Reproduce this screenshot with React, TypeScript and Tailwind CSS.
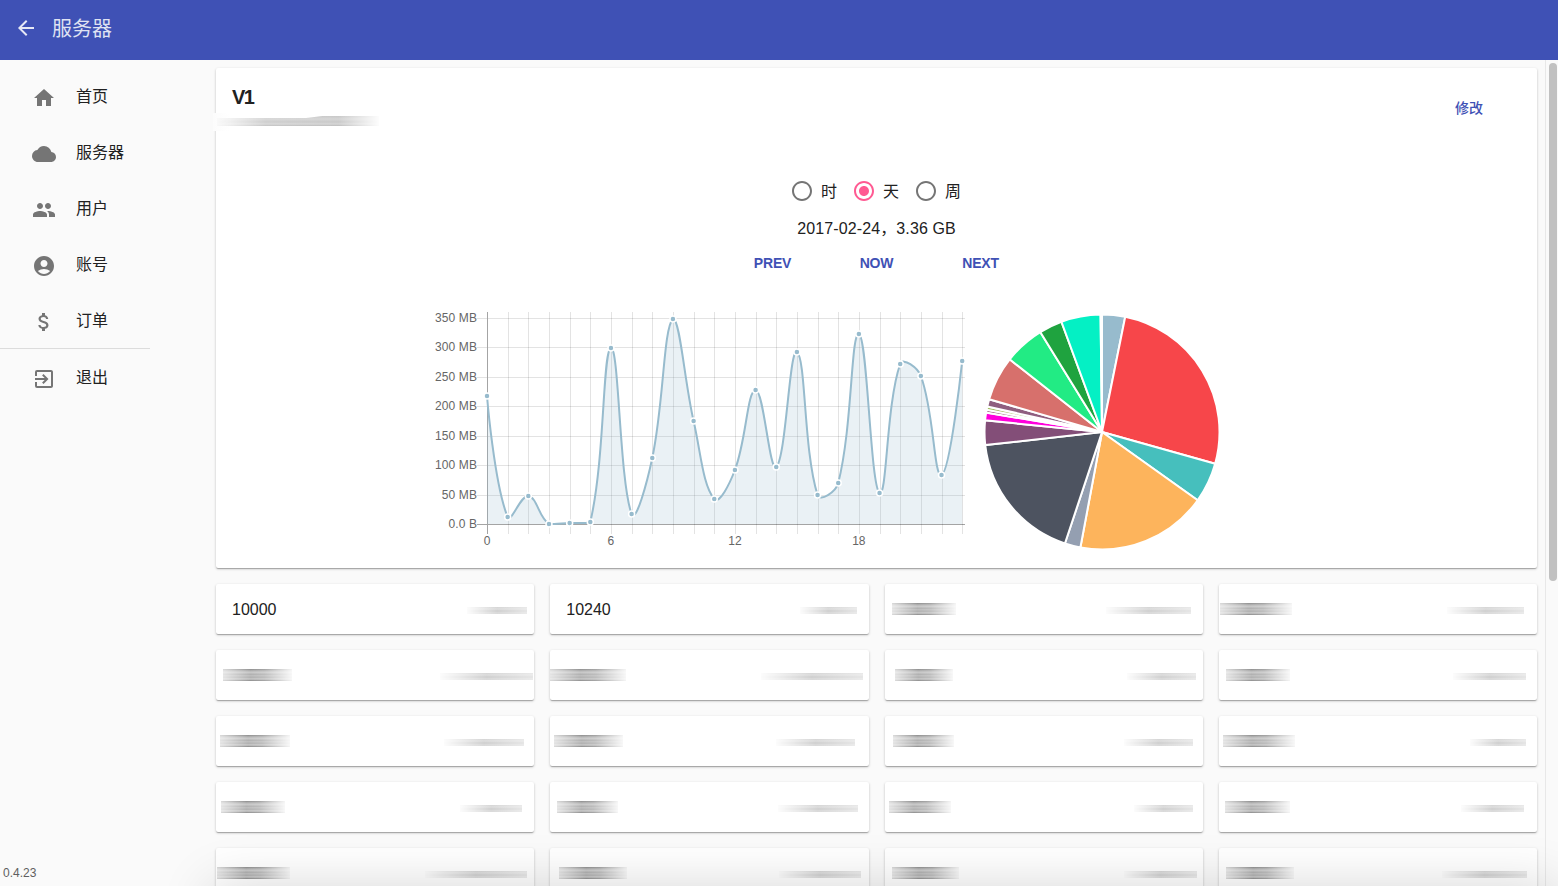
import {
  MdAccountCircle,
  MdArrowBack,
  MdAttachMoney,
  MdCloud,
  MdExitToApp,
  MdHome,
  MdPeople,
  MdRadioButtonChecked,
  MdRadioButtonUnchecked,
} from "react-icons/md";

const MENU = [
  { label: "首页", Icon: MdHome },
  { label: "服务器", Icon: MdCloud },
  { label: "用户", Icon: MdPeople },
  { label: "账号", Icon: MdAccountCircle },
  { label: "订单", Icon: MdAttachMoney },
];

const RANGES = ["时", "天", "周"];

// y position of every hour in the chart
const FLOW = [
  396, 517, 496, 524, 523, 522, 348, 514, 458, 319, 421, 499, 470, 390, 467,
  352, 495, 483, 334, 493, 364, 376, 475, 361,
];

const SLICES = [
  { end: 11.4, color: "#97bbcd" },
  { end: 105.65, color: "#f7464a" },
  { end: 125.5, color: "#46bfbd" },
  { end: 190.6, color: "#fdb45c" },
  { end: 198.4, color: "#949fb1" },
  { end: 263.6, color: "#4d5360" },
  { end: 275.7, color: "#834e78" },
  { end: 279.5, color: "#ff00dc" },
  { end: 280.9, color: "#8a4f6a" },
  { end: 282.5, color: "#a3c062" },
  { end: 286.2, color: "#8f5f80" },
  { end: 308.2, color: "#d7706c" },
  { end: 328.3, color: "#22eb84" },
  { end: 339.8, color: "#1fa33f" },
  { end: 359.3, color: "#04f0c4" },
  { end: 360, color: "#ffffff" },
];

type Port = { port?: string; left?: number[]; right: number[] };

// left / right: [distance from the card edge, width]
const PORTS: Port[] = [
  { port: "10000", right: [7, 60] },
  { port: "10240", right: [12, 57] },
  { left: [7, 64], right: [12, 85] },
  { left: [1, 72], right: [13, 77] },
  { left: [7, 69], right: [1, 93] },
  { left: [0, 76], right: [6, 102] },
  { left: [10, 58], right: [7, 69] },
  { left: [7, 64], right: [11, 73] },
  { left: [4, 70], right: [10, 80] },
  { left: [4, 69], right: [14, 79] },
  { left: [8, 61], right: [10, 69] },
  { left: [4, 72], right: [11, 56] },
  { left: [5, 64], right: [12, 62] },
  { left: [7, 61], right: [11, 80] },
  { left: [4, 62], right: [10, 59] },
  { left: [6, 65], right: [13, 63] },
  { left: [1, 73], right: [7, 102] },
  { left: [9, 68], right: [8, 82] },
  { left: [7, 67], right: [6, 73] },
  { left: [7, 68], right: [10, 85] },
];

const CARD =
  "rounded-[2px] bg-white shadow-[0_1px_3px_0_rgba(0,0,0,0.2),0_1px_1px_0_rgba(0,0,0,0.14),0_2px_1px_-1px_rgba(0,0,0,0.12)]";

function FlowChart() {
  const top = 318;
  const bottom = 524;
  const points = FLOW.map((y, i) => ({ x: 487 + i * 20.66, y }));
  const clamp = (y: number) => Math.min(bottom, Math.max(top, y));

  const controls = points.map((p, i) => {
    const prev = points[i - 1];
    const next = points[i + 1];
    if (!prev || !next) return { inner: p, outer: p };
    const d1 = Math.hypot(p.x - prev.x, p.y - prev.y);
    const d2 = Math.hypot(next.x - p.x, next.y - p.y);
    const a = (0.4 * d1) / (d1 + d2);
    const b = (0.4 * d2) / (d1 + d2);
    const dx = next.x - prev.x;
    const dy = next.y - prev.y;
    return {
      inner: { x: p.x - a * dx, y: clamp(p.y - a * dy) },
      outer: { x: p.x + b * dx, y: clamp(p.y + b * dy) },
    };
  });

  const line = points
    .map((p, i) => {
      if (i === 0) return `M${p.x} ${p.y}`;
      const c1 = controls[i - 1].outer;
      const c2 = controls[i].inner;
      return `C${c1.x} ${c1.y} ${c2.x} ${c2.y} ${p.x} ${p.y}`;
    })
    .join(" ");

  const rows = [0, 1, 2, 3, 4, 5, 6, 7];

  return (
    <svg width="540" height="250" viewBox="427 306 540 250" className="shrink-0">
      {rows.map((n) => {
        const y = Math.round(bottom - n * 29.43) + 0.5;
        return (
          <g key={n}>
            <line
              x1="477"
              x2="965"
              y1={y}
              y2={y}
              stroke={n === 0 ? "#a4a4a4" : "rgba(0,0,0,0.11)"}
            />
            <text
              x="477"
              y={y + 3.5}
              textAnchor="end"
              fontSize="12"
              letterSpacing="0.1"
              fill="#666"
            >
              {n === 0 ? "0.0 B" : `${n * 50} MB`}
            </text>
          </g>
        );
      })}
      {points.map((p, i) => (
        <line
          key={i}
          x1={Math.round(p.x) + 0.5}
          x2={Math.round(p.x) + 0.5}
          y1="312"
          y2="534"
          stroke={i === 0 ? "#a4a4a4" : "rgba(0,0,0,0.11)"}
        />
      ))}
      {[0, 6, 12, 18].map((n) => (
        <text key={n} x={points[n].x} y="545" textAnchor="middle" fontSize="12" fill="#666">
          {n}
        </text>
      ))}
      <path d={`${line} L${points[23].x} ${bottom} L487 ${bottom}Z`} fill="#97bbcd" fillOpacity="0.2" />
      <path d={line} fill="none" stroke="#97bbcd" strokeWidth="2" />
      {points.map((p, i) => (
        <circle key={i} cx={p.x} cy={p.y} r="3" fill="#97bbcd" stroke="#fff" strokeWidth="1.5" />
      ))}
    </svg>
  );
}

function UserPie() {
  const at = (deg: number) => {
    const rad = (deg * Math.PI) / 180;
    return `${119 + 117.5 * Math.sin(rad)} ${119 - 117.5 * Math.cos(rad)}`;
  };

  return (
    <svg width="238" height="238" viewBox="0 0 238 238" className="mt-[7px] shrink-0">
      {SLICES.map(({ end, color }, i) => {
        const start = i === 0 ? 0 : SLICES[i - 1].end;
        return (
          <path
            key={end}
            d={`M119 119 L${at(start)} A117.5 117.5 0 0 1 ${at(end)}Z`}
            fill={color}
            stroke="#fff"
            strokeWidth="2"
          />
        );
      })}
    </svg>
  );
}

function PortCard({ port, left, right }: Port) {
  return (
    <div className={`flex h-[50px] items-center justify-between ${CARD}`}>
      {port && <span className="pl-4 pt-0.5 text-base">{port}</span>}
      {left && (
        <span
          className="h-3 bg-[linear-gradient(to_bottom,#8a8a8a_0,#b8b8b8_2px,#cccccc_4px,#ababab_5px,#c4c4c4_7px,#aaaaaa_8px,#cacaca_10px,#858585_12px)] [mask-image:linear-gradient(to_right,rgba(0,0,0,0.35),#000_40%,rgba(0,0,0,0.85)_60%,rgba(0,0,0,0.1))]"
          style={{ marginLeft: left[0], width: left[1] }}
        />
      )}
      <span
        className="mt-[3px] h-[7px] bg-[linear-gradient(to_bottom,#d4d4d4_0,#dedede_2px,#cdcdcd_4px,#dddddd_6px,#d6d6d6_7px)] [mask-image:linear-gradient(to_right,rgba(0,0,0,0.08),#000_50%,rgba(0,0,0,0.55))]"
        style={{ marginRight: right[0], width: right[1] }}
      />
    </div>
  );
}

function Sidebar() {
  return (
    <nav className="flex w-[216px] shrink-0 flex-col pt-[10px]">
      {MENU.map(({ label, Icon }) => (
        <a key={label} className="flex h-14 items-center gap-5 pl-8">
          <Icon size={24} className="text-[#757575]" />
          <span className="-mt-0.5">{label}</span>
        </a>
      ))}
      <div className="-mt-0.5 mb-0.5 h-px w-[150px] shrink-0 bg-[#dcdcdc]" />
      <a className="flex h-14 items-center gap-5 pl-8">
        <MdExitToApp size={24} className="text-[#757575]" />
        <span className="-mt-0.5">退出</span>
      </a>
      <span className="mt-auto pb-[5px] pl-[3px] text-xs leading-4 text-[#5f5f5f]">0.4.23</span>
    </nav>
  );
}

export default function App() {
  return (
    <div className="relative flex h-[886px] w-[1558px] flex-col overflow-hidden bg-[#fafafa] font-['Liberation_Sans','Noto_Sans_CJK_SC',sans-serif] text-base text-[#212121]">
      <header className="flex h-[60px] shrink-0 items-center bg-[#3f51b5] pb-1 pl-[14px] text-[#e6e8f5]">
        <MdArrowBack size={24} />
        <h1 className="pl-[14px] pt-0.5 text-xl font-normal text-[#dfe2f2]">服务器</h1>
      </header>

      <div className="flex min-h-0 flex-1">
        <Sidebar />

        <main className="flex w-[1321px] shrink-0 flex-col gap-4 pt-2">
          <section className={`relative flex h-[500px] shrink-0 flex-col ${CARD}`}>
            <div className="flex h-[104px] items-start justify-between pl-4 pr-[54px]">
              <h2 className="pt-[15px] text-xl font-bold leading-7 tracking-[-1.5px]">V1</h2>
              <button className="mt-[30px] text-sm font-medium text-[#3f51b5]">修改</button>
            </div>
            {/* hidden host name */}
            <div className="absolute -left-[3px] top-[45px] flex h-[18px] w-[170px] items-center bg-gradient-to-r from-[#fcfcfc] to-white to-10%">
              <div className="-mt-0.5 ml-1 h-[10px] w-[162px] bg-[linear-gradient(to_bottom,#c8c8c8_0,#d6d6d6_3px,#c9c9c9_6px,#d6d6d6_8px,#bcbcbc_10px)] [clip-path:polygon(0_20%,55%_20%,65%_0,100%_0,100%_100%,0_100%)] [mask-image:linear-gradient(to_right,rgba(0,0,0,0.08),rgba(0,0,0,0.9)_30%,#000_75%,rgba(0,0,0,0.05))]" />
            </div>

            <div className="flex h-[38px] items-center justify-center gap-[14px] pr-px">
              {RANGES.map((name) => (
                <label key={name} className="flex h-6 w-12 items-center gap-[7px]">
                  {name === "天" ? (
                    <MdRadioButtonChecked size={24} className="shrink-0 text-[#ff5a92]" />
                  ) : (
                    <MdRadioButtonUnchecked size={24} className="shrink-0 text-[#757575]" />
                  )}
                  <span className="pt-0.5">{name}</span>
                </label>
              ))}
            </div>
            <p className="pt-[7px] text-center tracking-[0.12px]">2017-02-24，3.36 GB</p>
            <div className="-mt-px flex h-[46px] items-center justify-center gap-4 text-sm font-bold tracking-[-0.2px] text-[#3f51b5]">
              <button className="w-[88px]">PREV</button>
              <button className="w-[88px]">NOW</button>
              <button className="w-[88px]">NEXT</button>
            </div>

            <div className="flex items-start gap-4 pl-[211px] pt-5">
              <FlowChart />
              <UserPie />
            </div>
          </section>

          <div className="grid grid-cols-4 gap-4">
            {PORTS.map((item, i) => (
              <PortCard key={i} {...item} />
            ))}
          </div>
        </main>

        <div className="ml-2 flex-1 border-l border-[#e8e8e8] pl-[3px] pt-[3px]">
          <div className="h-[518px] w-2 rounded-full bg-[#c1c1c1]" />
        </div>
      </div>

      <div className="absolute left-[212px] right-0 top-full h-40 shadow-[0_0_50px_rgba(0,0,0,0.16)]" />
    </div>
  );
}
